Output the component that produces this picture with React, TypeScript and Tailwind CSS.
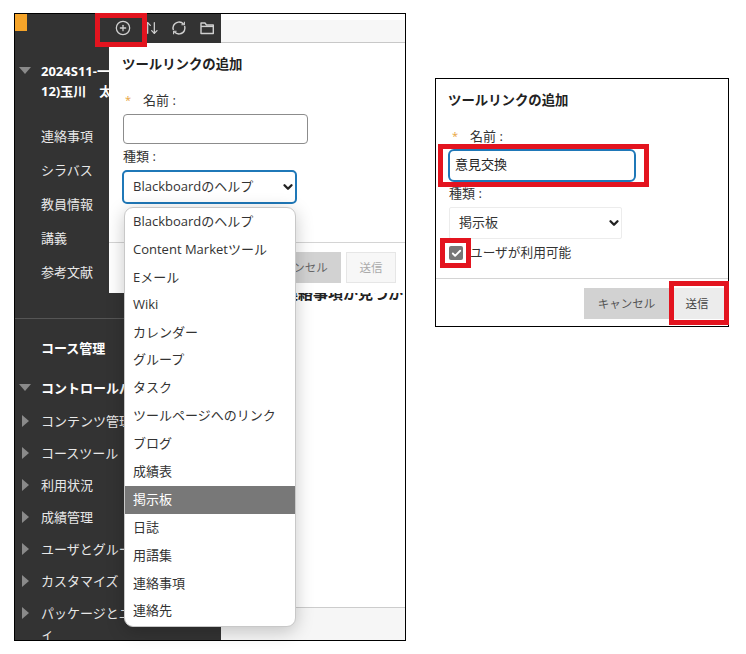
import React from "react";
import { ArrowUpDown, ChevronDown, CirclePlus, Check } from "lucide-react";

const font = "[font-family:'Open_Sans','Noto_Sans_CJK_JP',sans-serif]";

const courseLinks = ["連絡事項", "シラバス", "教員情報", "講義", "参考文献"];
const controlLinks = ["コンテンツ管理", "コースツール", "利用状況", "成績管理", "ユーザとグループ", "カスタマイズ", "パッケージとユーティリティ"];
const toolTypes = [
  "Blackboardのヘルプ",
  "Content Marketツール",
  "Eメール",
  "Wiki",
  "カレンダー",
  "グループ",
  "タスク",
  "ツールページへのリンク",
  "ブログ",
  "成績表",
  "掲示板",
  "日誌",
  "用語集",
  "連絡事項",
  "連絡先",
];

function TriangleDown() {
  return (
    <svg width="12" height="7" viewBox="0 0 12 7" className="absolute left-[4px] top-[6px]">
      <path d="M0 0h12L6 7z" fill="#8a8a8a" />
    </svg>
  );
}

function TriangleRight() {
  return (
    <svg width="7" height="12" viewBox="0 0 7 12" className="absolute left-[7px] top-[10px]">
      <path d="M0 0l7 6-7 6z" fill="#8a8a8a" />
    </svg>
  );
}

function RefreshIcon() {
  return (
    <svg width="16" height="16" viewBox="0 0 16 16" fill="none" stroke="currentColor" strokeWidth="1.4">
      <path d="M12.6 4.2A6 6 0 0 0 2.6 5.4 6 6 0 0 0 2.4 10" />
      <path d="M3.4 11.8a6 6 0 0 0 10-1.2 6 6 0 0 0 .2-4.6" />
      <path d="M13.4 1.8v3h-3" strokeWidth="1.1" />
      <path d="M2.6 14.2v-3h3" strokeWidth="1.1" />
    </svg>
  );
}

function FolderIcon() {
  return (
    <svg width="16" height="16" viewBox="0 0 16 16" fill="none" stroke="currentColor" strokeWidth="1.4">
      <path d="M2 3h4l1.5 2H14.3v8.5H2z" strokeLinejoin="round" />
      <path d="M2 6.4h12.3" />
    </svg>
  );
}

function Sidebar() {
  return (
    <aside className="w-[206px] h-full shrink-0 bg-[#333333] text-[13px] text-[#e8e8e8] overflow-hidden">
      <div className="h-[28px] flex items-start">
        <div className="w-[12px] h-[17px] bg-[#f5a429]" />
        <div className="flex gap-[12px] ml-[88px] mt-[6px] text-[#d0d0d0]">
          <CirclePlus size={16} strokeWidth={1.9} />
          <ArrowUpDown size={16} strokeWidth={1.9} />
          <RefreshIcon />
          <FolderIcon />
        </div>
      </div>

      <div className="relative mt-[19px] pl-[26px] font-bold text-white leading-[20px] whitespace-nowrap">
        <TriangleDown />
        <div>2024S11-一般教養</div>
        <div>12)玉川　太郎</div>
      </div>
      <ul className="mt-[18px] pl-[26px]">
        {courseLinks.map((link) => (
          <li key={link} className="h-[34px] leading-[34px]">
            {link}
          </li>
        ))}
      </ul>

      <div className="mt-[29px] border-t border-[#555555]" />
      <div className="mt-[19px] pl-[26px] font-bold text-white leading-[20px]">コース管理</div>
      <div className="relative mt-[20px] pl-[26px] font-bold text-white leading-[20px] whitespace-nowrap">
        <TriangleDown />
        コントロールパネル
      </div>
      <ul className="mt-[7px]">
        {controlLinks.map((link) => (
          <li key={link} className="relative min-h-[32px] pl-[26px] pr-[14px] py-[6px] leading-[20px]">
            <TriangleRight />
            {link}
          </li>
        ))}
      </ul>
    </aside>
  );
}

function FieldName({ children }: { children: React.ReactNode }) {
  return (
    <div className="flex items-center text-[13px] text-[#333333] leading-[20px]">
      <span className="w-[20px] pl-[2px] text-[11px] text-[#e8a33c]">*</span>
      {children}
    </div>
  );
}

function ToolLinkModal() {
  return (
    <div className="absolute left-[94px] top-[29px] w-[296px] h-[250px] bg-white flex flex-col">
      <div className="h-[199px] pl-[14px] pt-[11px] text-[#333333]">
        <h2 className="-ml-px text-[13.4px] font-bold leading-[20px] text-[#222222]">ツールリンクの追加</h2>
        <div className="mt-[16px]">
          <FieldName>名前 :</FieldName>
        </div>
        <input readOnly className="block mt-[4px] w-[185px] h-[30px] rounded-[4px] border border-[#8c8c8c] bg-white" />
        <div className="mt-[2px] text-[13px] leading-[20px]">種類 :</div>
        <div className="mt-[4px] -ml-px w-[175px] h-[34px] rounded-[5px] border-2 border-[#1f78b8] pl-[9px] flex items-center justify-between text-[13px]">
          Blackboardのヘルプ
          <ChevronDown size={14} strokeWidth={4} className="text-[#222222]" />
        </div>
      </div>
      <div className="flex-1 border-t border-[#d4d4d4] flex justify-end items-start gap-[5px] pt-[9px] pr-[9px] text-[11.5px]">
        <div className="w-[84px] h-[31px] bg-[#d2d2d2] text-[#666666] flex items-center justify-center">キャンセル</div>
        <div className="w-[50px] h-[31px] bg-[#f7f7f7] border border-[#e6e6e6] text-[#aaaaaa] flex items-center justify-center">送信</div>
      </div>
    </div>
  );
}

function TypeDropdown() {
  return (
    <ul className="absolute left-[109px] top-[193px] w-[172px] rounded-[9px] border border-[#c8c8c8] bg-white pb-[1px] overflow-hidden shadow-[0_4px_18px_rgba(0,0,0,0.22)] text-[13px] text-[#333333]">
      {toolTypes.map((type) => (
        <li
          key={type}
          className={`pl-[8px] flex items-center whitespace-nowrap ${type === "Wiki" ? "h-[26.7px]" : "h-[27.9px]"} ${type === "掲示板" ? "bg-[#787878] text-white" : ""}`}
        >
          {type}
        </li>
      ))}
    </ul>
  );
}

function CourseScreen() {
  return (
    <div className="relative w-[392px] h-[628px] shrink-0 border border-black flex">
      <Sidebar />
      <main className="flex-1 h-full flex flex-col overflow-hidden">
        <div className="h-[29px] shrink-0 pt-[6px] bg-white">
          <div className="h-full bg-[#f7f7f7] border-b border-[#c8c8c8]" />
        </div>
        <div className="flex-1 pt-[240px] bg-white whitespace-nowrap text-[15px] font-bold text-[#222222] leading-[20px]">
          <span className="ml-[62px]">連絡事項が見つかりません</span>
        </div>
        <div className="h-[33px] shrink-0 bg-[#f6f6f6] border-t border-[#cccccc]" />
      </main>
      <ToolLinkModal />
      <TypeDropdown />
      {/* highlight around the add button */}
      <div className="absolute left-[80px] -top-px w-[52px] h-[34px] border-[5px] border-[#e3141f]" />
    </div>
  );
}

function FilledForm() {
  return (
    <div className="relative w-[294px] h-[249px] shrink-0 border border-black bg-white text-[#333333]">
      <div className="pl-[12px] pt-[11px]">
        <h2 className="text-[13.4px] font-bold leading-[20px] text-[#222222]">ツールリンクの追加</h2>
        <div className="mt-[16px] ml-[2px]">
          <FieldName>名前 :</FieldName>
        </div>
        <input
          readOnly
          value="意見交換"
          className="block mt-[3px] w-[188px] h-[33px] rounded-[6px] border-2 border-[#1f78b8] pl-[5px] pb-[4px] text-[13px] text-[#222222] outline-none"
        />
        <div className="mt-[1px] pl-px text-[13px] leading-[20px]">種類 :</div>
        <div className="mt-[4px] ml-px w-[173px] h-[32px] rounded-[2px] border border-[#ececec] pl-[9px] flex items-center justify-between text-[13px]">
          掲示板
          <ChevronDown size={14} strokeWidth={4} className="text-[#222222]" />
        </div>
        <div className="mt-[4px] ml-px h-[20px] flex items-center text-[13px]">
          <span className="w-[14px] h-[14px] rounded-[2px] bg-[#777777] flex items-center justify-center">
            <Check size={11} strokeWidth={4} className="text-white" />
          </span>
          <span className="ml-[7px] text-[12.7px]">ユーザが利用可能</span>
        </div>
      </div>
      <div className="mt-[15px] border-t border-[#d4d4d4] flex justify-end items-start gap-[5px] pt-[9px] pr-[4px] text-[11.5px]">
        <div className="w-[85px] h-[31px] bg-[#d2d2d2] text-[#555555] flex items-center justify-center">キャンセル</div>
        <div className="w-[50px] h-[31px] bg-[#ececec] text-[#444444] pr-[4px] flex items-center justify-center">送信</div>
      </div>

      {/* highlights around the steps */}
      <div className="absolute left-[2px] top-[65px] w-[211px] h-[43px] border-[5px] border-[#e3141f]" />
      <div className="absolute left-[4px] top-[159px] w-[31px] h-[30px] border-[5px] border-[#e3141f]" />
      <div className="absolute left-[233px] top-[202px] w-[60px] h-[44px] border-[5px] border-[#e3141f]" />
    </div>
  );
}

export default function App() {
  return (
    <div className={`w-[746px] h-[654px] bg-white flex items-start overflow-hidden ${font}`}>
      <div className="ml-[14px] mt-[13px]">
        <CourseScreen />
      </div>
      <div className="ml-[29px] mt-[78px]">
        <FilledForm />
      </div>
    </div>
  );
}
